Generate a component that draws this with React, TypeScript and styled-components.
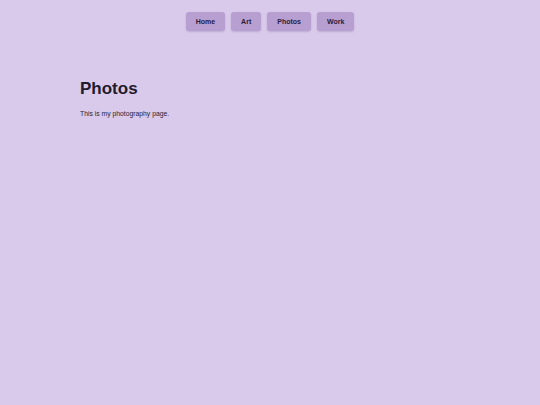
import React from 'react';
import styled, { createGlobalStyle } from 'styled-components';

const GlobalStyle = createGlobalStyle`
  html, body {
    margin: 0;
    padding: 0;
    background: #d9caeb;
    font-family: "Liberation Sans", Arial, sans-serif;
    color: #231a2e;
  }
`;

const Page = styled.div`
  min-height: 405px;
  background: #d9caeb;
`;

const Nav = styled.nav`
  display: flex;
  justify-content: center;
  gap: 6px;
  padding-top: 12px;
`;

const NavButton = styled.button`
  height: 19px;
  padding: 0 10px;
  border: none;
  border-radius: 3px;
  background: #b89fd2;
  color: #2a1c3a;
  font-family: "Liberation Sans", Arial, sans-serif;
  font-size: 7px;
  font-weight: 700;
  box-shadow: 0 1px 2px rgba(80, 50, 110, 0.2);
  cursor: pointer;
`;

const Main = styled.main`
  max-width: 380px;
  margin: 0 auto;
  padding-top: 48px;
`;

const Title = styled.h1`
  margin: 0;
  font-size: 17px;
  font-weight: 700;
  color: #231a2e;
  line-height: 1.2;
`;

const Text = styled.p`
  margin: 11px 0 0;
  font-size: 6.8px;
  color: #2a2233;
`;

const App: React.FC = () => {
  const links = ['Home', 'Art', 'Photos', 'Work'];
  return (
    <Page>
      <GlobalStyle />
      <Nav>
        {links.map((l) => (
          <NavButton key={l}>{l}</NavButton>
        ))}
      </Nav>
      <Main>
        <Title>Photos</Title>
        <Text>This is my photography page.</Text>
      </Main>
    </Page>
  );
};

export default App;
